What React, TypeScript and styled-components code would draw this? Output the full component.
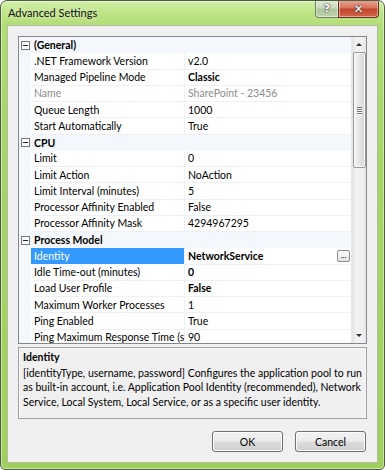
import React from 'react';
import styled, { createGlobalStyle } from 'styled-components';

const FONT = `Lato, "Open Sans", "DejaVu Sans", sans-serif`;

const Global = createGlobalStyle`
  html, body { margin: 0; padding: 0; background: #ffffff; }
  body { font-family: ${FONT}; font-size: 10.5px; color: #000; }
  * { box-sizing: border-box; }
`;

const Window = styled.div`
  width: 385px;
  height: 470px;
  border: 1px solid #4d5d3f;
  border-radius: 7px 7px 5px 5px;
  background: linear-gradient(180deg, #d3efa8 0px, #bde385 12px, #b3dd76 25px, #a8d66a 120px, #9fd05e 100%);
  display: flex;
  flex-direction: column;
  overflow: hidden;
  box-shadow: inset 0 0 0 1px rgba(255, 255, 255, 0.45);
`;

const TitleBar = styled.div`
  height: 24px;
  display: flex;
  align-items: flex-start;
  flex: none;
`;

const Title = styled.div`
  padding: 5px 0 0 7px;
  font-size: 11px;
  color: #111;
  text-shadow: 0 0 6px rgba(255, 255, 255, 0.9);
`;

const Caption = styled.div`
  margin-left: auto;
  margin-right: 5px;
  margin-top: -1px;
  display: flex;
`;

const CapButton = styled.div<{ $close?: boolean }>`
  height: 18px;
  width: ${(p) => (p.$close ? 41 : 24)}px;
  border: 1px solid ${(p) => (p.$close ? '#6a2d22' : '#6f8060')};
  border-top: none;
  border-radius: ${(p) => (p.$close ? '0 0 4px 0' : '0 0 0 4px')};
  margin-left: ${(p) => (p.$close ? '-1px' : '0')};
  background: ${(p) =>
    p.$close
      ? 'linear-gradient(180deg, #e9a897 0%, #d8745e 45%, #c2452c 55%, #d1644a 100%)'
      : 'linear-gradient(180deg, #e3ecd8 0%, #cad9bb 45%, #b0c49b 55%, #c1d5ac 100%)'};
  box-shadow: inset 0 0 0 1px rgba(255, 255, 255, 0.45);
  display: flex;
  align-items: center;
  justify-content: center;
  color: #fff;
  font-family: "DejaVu Sans", sans-serif;
  font-weight: bold;
  font-size: ${(p) => (p.$close ? 12 : 11)}px;
  text-shadow: 0 0 2px #333, 0 0 1px #333;
`;

const Client = styled.div`
  flex: 1;
  margin: 0 6px 6px 6px;
  background: #f0f0f0;
  border: 1px solid #aebfa0;
  padding: 10px 10px 0 10px;
  display: flex;
  flex-direction: column;
`;

const Grid = styled.div`
  height: 308px;
  border: 1px solid #828790;
  background: #ffffff;
  display: flex;
  flex: none;
`;

const Rows = styled.div`
  flex: 1;
  overflow: hidden;
  display: flex;
  flex-direction: column;
`;

const CatRow = styled.div`
  flex: none;
  height: 16.25px;
  background: #f4f7fc;
  display: flex;
  align-items: center;
  font-weight: bold;
`;

const Expander = styled.div`
  width: 9px;
  height: 9px;
  margin: 0 4px 0 2px;
  border: 1px solid #7a7a7a;
  background: #fff;
  position: relative;
  &::after {
    content: '';
    position: absolute;
    left: 1px;
    right: 1px;
    top: 3px;
    height: 1px;
    background: #222;
  }
`;

const PropRow = styled.div`
  flex: none;
  height: 16.25px;
  display: grid;
  grid-template-columns: 12px 154px 1fr;
`;

const Margin = styled.div`
  background: #f4f7fc;
`;

const NameCell = styled.div<{ $sel?: boolean; $dim?: boolean }>`
  padding-left: 3px;
  display: flex;
  align-items: center;
  white-space: nowrap;
  overflow: hidden;
  border-bottom: 1px solid ${(p) => (p.$sel ? '#ffffff' : '#edf1f6')};
  border-right: 1px solid #edf1f6;
  background: ${(p) => (p.$sel ? '#3399ff' : '#ffffff')};
  color: ${(p) => (p.$sel ? '#ffffff' : p.$dim ? '#8d8d8d' : '#000')};
`;

const ValueCell = styled.div<{ $bold?: boolean; $dim?: boolean }>`
  padding-left: 3px;
  display: flex;
  align-items: center;
  white-space: nowrap;
  overflow: hidden;
  border-bottom: 1px solid #edf1f6;
  font-weight: ${(p) => (p.$bold ? 'bold' : 'normal')};
  color: ${(p) => (p.$dim ? '#8d8d8d' : '#000')};
`;

const Ellipsis = styled.div`
  margin-left: auto;
  margin-right: 1px;
  width: 13px;
  height: 12px;
  border: 1px solid #8c8c8c;
  border-radius: 2px;
  background: linear-gradient(180deg, #fbfbfb, #e2e2e2);
  font-size: 8px;
  line-height: 9px;
  text-align: center;
  font-weight: normal;
  color: #000;
`;

const Scrollbar = styled.div`
  width: 15px;
  flex: none;
  background: linear-gradient(90deg, #e3e3e3, #f1f1f1 30%, #f1f1f1 70%, #e6e6e6);
  border-left: 1px solid #e8e8e8;
  display: flex;
  flex-direction: column;
  align-items: center;
`;

const Arrow = styled.div<{ $down?: boolean }>`
  height: 15px;
  width: 100%;
  flex: none;
  display: flex;
  align-items: center;
  justify-content: center;
  &::after {
    content: '';
    border-left: 3px solid transparent;
    border-right: 3px solid transparent;
    ${(p) => (p.$down ? 'border-top: 3px solid #333;' : 'border-bottom: 3px solid #333;')}
  }
`;

const Thumb = styled.div`
  width: 13px;
  height: 116px;
  flex: none;
  border: 1px solid #979797;
  border-radius: 2px;
  background: linear-gradient(90deg, #f3f3f3, #e5e5e5 50%, #d6d6d6);
  box-shadow: inset 0 0 0 1px #fafafa;
  display: flex;
  flex-direction: column;
  align-items: center;
  justify-content: center;
  gap: 1px;
`;

const Grip = styled.div`
  width: 5px;
  height: 1px;
  background: #6f6f6f;
  box-shadow: 0 1px 0 #fff;
`;

const Spacer = styled.div`
  flex: 1;
`;

const Desc = styled.div`
  margin-top: 3px;
  height: 72px;
  border: 1px solid #a0a0a0;
  background: #f0f0f0;
  box-shadow: inset 0 0 0 1px #f8f8f8;
  padding: 2px 4px;
  line-height: 14.5px;
  white-space: nowrap;
`;

const DescTitle = styled.div`
  font-weight: bold;
  margin-bottom: 1px;
`;

const Buttons = styled.div`
  margin-top: 12px;
  display: flex;
  justify-content: flex-end;
  gap: 12px;
  padding-right: 1px;
`;

const Button = styled.div`
  width: 71px;
  height: 21px;
  border: 1px solid #707070;
  border-radius: 3px;
  background: linear-gradient(180deg, #f2f2f2 0%, #ebebeb 49%, #dddddd 51%, #cfcfcf 100%);
  box-shadow: inset 0 0 0 1px #fcfcfc;
  display: flex;
  align-items: center;
  justify-content: center;
`;

type Prop = { name: string; value: string; bold?: boolean; dim?: boolean; sel?: boolean; dots?: boolean };
type Cat = { title: string; props: Prop[] };

const data: Cat[] = [
  {
    title: '(General)',
    props: [
      { name: '.NET Framework Version', value: 'v2.0' },
      { name: 'Managed Pipeline Mode', value: 'Classic', bold: true },
      { name: 'Name', value: 'SharePoint - 23456', dim: true },
      { name: 'Queue Length', value: '1000' },
      { name: 'Start Automatically', value: 'True' },
    ],
  },
  {
    title: 'CPU',
    props: [
      { name: 'Limit', value: '0' },
      { name: 'Limit Action', value: 'NoAction' },
      { name: 'Limit Interval (minutes)', value: '5' },
      { name: 'Processor Affinity Enabled', value: 'False' },
      { name: 'Processor Affinity Mask', value: '4294967295' },
    ],
  },
  {
    title: 'Process Model',
    props: [
      { name: 'Identity', value: 'NetworkService', bold: true, sel: true, dots: true },
      { name: 'Idle Time-out (minutes)', value: '0', bold: true },
      { name: 'Load User Profile', value: 'False', bold: true },
      { name: 'Maximum Worker Processes', value: '1' },
      { name: 'Ping Enabled', value: 'True' },
      { name: 'Ping Maximum Response Time (seconds)', value: '90' },
    ],
  },
];

export default function App() {
  return (
    <>
      <Global />
      <Window>
        <TitleBar>
          <Title>Advanced Settings</Title>
          <Caption>
            <CapButton>?</CapButton>
            <CapButton $close>✕</CapButton>
          </Caption>
        </TitleBar>
        <Client>
          <Grid>
            <Rows>
              {data.map((cat) => (
                <React.Fragment key={cat.title}>
                  <CatRow>
                    <Expander />
                    {cat.title}
                  </CatRow>
                  {cat.props.map((p) => (
                    <PropRow key={p.name}>
                      <Margin />
                      <NameCell $sel={p.sel} $dim={p.dim}>
                        {p.name}
                      </NameCell>
                      <ValueCell $bold={p.bold} $dim={p.dim}>
                        {p.value}
                        {p.dots && <Ellipsis>...</Ellipsis>}
                      </ValueCell>
                    </PropRow>
                  ))}
                </React.Fragment>
              ))}
            </Rows>
            <Scrollbar>
              <Arrow />
              <Thumb>
                <Grip />
                <Grip />
                <Grip />
                <Grip />
              </Thumb>
              <Spacer />
              <Arrow $down />
            </Scrollbar>
          </Grid>
          <Desc>
            <DescTitle>Identity</DescTitle>
            <div>[identityType, username, password] Configures the application pool to run</div>
            <div>as built-in account, i.e. Application Pool Identity (recommended), Network</div>
            <div>Service, Local System, Local Service, or as a specific user identity.</div>
          </Desc>
          <Buttons>
            <Button>OK</Button>
            <Button>Cancel</Button>
          </Buttons>
        </Client>
      </Window>
    </>
  );
}
